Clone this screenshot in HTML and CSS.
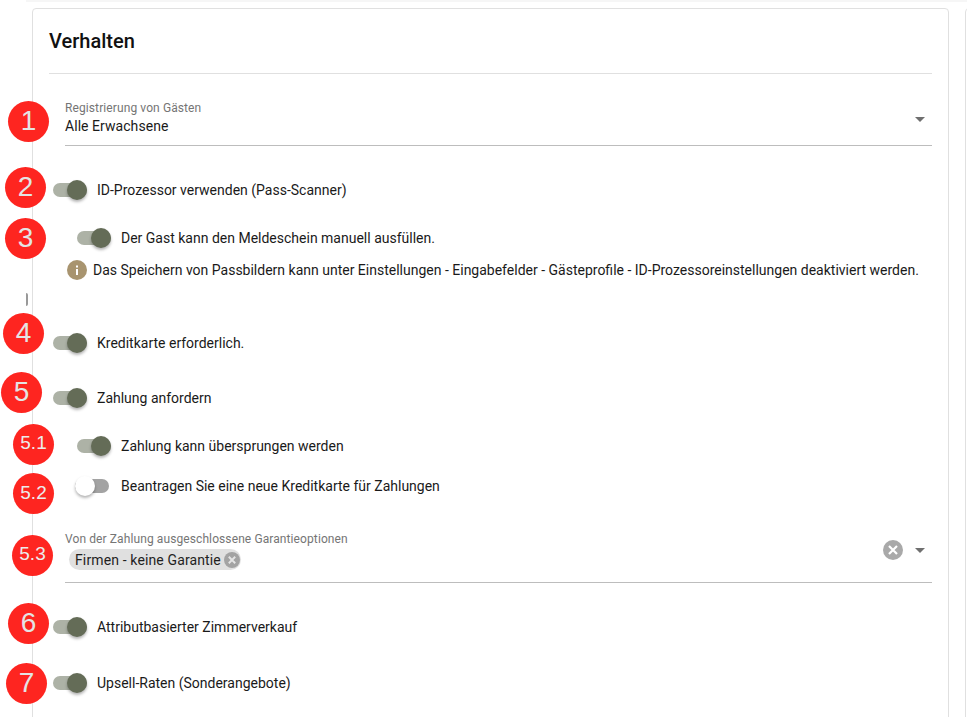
FILE: index.html
```html
<!DOCTYPE html>
<html lang="de">
<head>
<meta charset="utf-8">
<title>Verhalten</title>
<link rel="stylesheet" href="styles.css">
</head>
<body>
<div class="page">
  <div class="topstrip"></div>
  <div class="columns">
    <section class="card">
      <h2 class="title">Verhalten</h2>
      <div class="divider"></div>

      <div class="select select-a">
        <div class="select-body">
          <div class="label">Registrierung von Gästen</div>
          <div class="value">Alle Erwachsene</div>
        </div>
        <span class="caret"></span>
      </div>

      <div class="row row-2"><span class="toggle"><span class="knob"></span></span><span>ID-Prozessor verwenden (Pass-Scanner)</span></div>
      <div class="row nested row-3"><span class="toggle"><span class="knob"></span></span><span>Der Gast kann den Meldeschein manuell ausfüllen.</span></div>
      <div class="info">
        <svg class="info-icon" width="20" height="20" viewBox="0 0 20 20"><circle cx="10" cy="10" r="10" fill="#a8946f"/><rect x="9" y="9" width="2" height="6" fill="#fff"/><rect x="9" y="5.5" width="2" height="2" fill="#fff"/></svg>
        <span>Das Speichern von Passbildern kann unter Einstellungen - Eingabefelder - Gästeprofile - ID-Prozessoreinstellungen deaktiviert werden.</span>
      </div>
      <div class="row row-4"><span class="toggle"><span class="knob"></span></span><span>Kreditkarte erforderlich.</span></div>
      <div class="row row-5"><span class="toggle"><span class="knob"></span></span><span>Zahlung anfordern</span></div>
      <div class="row nested row-51"><span class="toggle"><span class="knob"></span></span><span>Zahlung kann übersprungen werden</span></div>
      <div class="row nested row-52"><span class="toggle off"><span class="knob"></span></span><span>Beantragen Sie eine neue Kreditkarte für Zahlungen</span></div>

      <div class="select select-b">
        <div class="select-body">
          <div class="label">Von der Zahlung ausgeschlossene Garantieoptionen</div>
          <span class="chip">Firmen - keine Garantie
            <svg class="chip-x" width="16" height="16" viewBox="0 0 20 20"><circle cx="10" cy="10" r="10" fill="#a3a3a3"/><path d="M6 6l8 8M14 6l-8 8" stroke="#e4e4e4" stroke-width="2.4" fill="none"/></svg>
          </span>
        </div>
        <svg class="clear" width="20" height="20" viewBox="0 0 20 20"><circle cx="10" cy="10" r="10" fill="#a9a9a9"/><path d="M6 6l8 8M14 6l-8 8" stroke="#fff" stroke-width="2.2" fill="none"/></svg>
        <span class="caret"></span>
      </div>

      <div class="row row-6"><span class="toggle"><span class="knob"></span></span><span>Attributbasierter Zimmerverkauf</span></div>
      <div class="row row-7"><span class="toggle"><span class="knob"></span></span><span>Upsell-Raten (Sonderangebote)</span></div>
    </section>
    <section class="card-next"></section>
  </div>

  <span class="sliver"></span>
  <span class="badge b1 big">1</span>
  <span class="badge b2 big">2</span>
  <span class="badge b3 big">3</span>
  <span class="badge b4 big">4</span>
  <span class="badge b5 big">5</span>
  <span class="badge b51">5.1</span>
  <span class="badge b52">5.2</span>
  <span class="badge b53">5.3</span>
  <span class="badge b6 big">6</span>
  <span class="badge b7 big">7</span>
</div>
</body>
</html>
```
FILE: styles.css
```css
html, body {
  margin: 0;
  height: 100%;
  overflow: hidden;
  background: #fff;
}
body {
  font-family: Roboto, "Liberation Sans", sans-serif;
  font-size: 14px;
  color: #1a1a1a;
}
.page {
  position: relative;
  width: 967px;
  height: 717px;
  overflow: hidden;
}
.topstrip {
  height: 2px;
  margin-left: 26px;
  background: #f6f6f6;
}
.columns {
  display: flex;
  gap: 16px;
  padding: 6px 0 0 32px;
}
.card {
  flex: none;
  width: 917px;
  height: 900px;
  box-sizing: border-box;
  border: 1px solid #e0e0e0;
  border-radius: 4px;
  padding: 0 16px;
}
.card-next {
  flex: none;
  width: 200px;
  height: 900px;
  border: 1px solid #e0e0e0;
  border-radius: 4px;
}
.title {
  margin: 0;
  height: 64px;
  line-height: 64px;
  font-size: 20px;
  font-weight: 500;
  color: #111;
}
.divider {
  height: 1px;
  background: #e0e0e0;
}
.select {
  display: flex;
  align-items: center;
  margin-left: 16px;
  border-bottom: 1px solid #bdbdbd;
  box-sizing: border-box;
}
.select-body { flex: 1; }
.select-a {
  height: 72px;
  padding-top: 17px;
}
.select-b {
  height: 66px;
  margin-top: 19px;
  padding-top: 3px;
}
.label {
  font-size: 12px;
  line-height: 14px;
  letter-spacing: .1px;
  color: #757575;
}
.value {
  font-size: 14px;
  line-height: 20px;
  margin-top: 1px;
  letter-spacing: .05px;
}
.caret {
  width: 0;
  height: 0;
  margin: 0 7px 0 10px;
  border-left: 5px solid transparent;
  border-right: 5px solid transparent;
  border-top: 5px solid #6f6f6f;
}
.select-a .caret { margin-top: 2px; }
.select-b .caret { margin-top: -1px; margin-left: 12px; }
.clear { flex: none; margin-top: -3px; }
.chip {
  display: inline-flex;
  align-items: center;
  height: 21px;
  margin: 3px 0 0 4px;
  padding: 0 1px 0 6px;
  border-radius: 11px;
  background: #e0e0e0;
  color: #1f1f1f;
  letter-spacing: .13px;
  white-space: nowrap;
}
.chip-x { margin-left: 3px; }
.row {
  display: flex;
  align-items: center;
  height: 24px;
  margin-left: 4px;
  gap: 10px;
}
.row.nested { margin-left: 28px; }
.row-2 { margin-top: 32px; }
.row-3 { margin-top: 24px; }
.row-4 { margin-top: 51px; }
.row-5 { margin-top: 31px; }
.row-51 { margin-top: 24px; }
.row-52 { margin-top: 16px; }
.row-6 { margin-top: 32px; }
.row-7 { margin-top: 32px; }
.toggle {
  position: relative;
  flex: none;
  width: 34px;
  height: 14px;
  border-radius: 7px;
  background: #adb2a6;
}
.knob {
  position: absolute;
  top: -3px;
  right: 0;
  width: 20px;
  height: 20px;
  border-radius: 50%;
  background: #646c57;
  box-shadow: 0 2px 3px rgba(0,0,0,.3);
}
.toggle.off {
  margin: 0 2px 0 -2px;
  background: #a3a3a3;
}
.toggle.off .knob {
  right: auto;
  left: 0;
  background: #fff;
}
.info {
  display: flex;
  align-items: center;
  gap: 6px;
  height: 20px;
  margin: 10px 0 0 18px;
  white-space: nowrap;
}
.info-icon { flex: none; }
.sliver {
  position: absolute;
  left: 26px;
  top: 293px;
  width: 2px;
  height: 13px;
  border-radius: 0 2px 2px 0;
  background: #999;
}
.badge {
  position: absolute;
  width: 41px;
  height: 41px;
  border-radius: 50%;
  background: #fe2520;
  color: #ececec;
  font-family: "Liberation Sans", Arial, sans-serif;
  font-size: 19px;
  line-height: 38px;
  text-align: center;
}
.badge.big { font-size: 28px; line-height: 40px; color: #e4e4e4; }
.b1 { left: 8px; top: 101px; }
.b2 { left: 5px; top: 167px; }
.b3 { left: 5px; top: 218px; }
.b4 { left: 3px; top: 313px; }
.b5 { left: 1px; top: 372px; }
.b51 { left: 13px; top: 424px; }
.b52 { left: 13px; top: 473px; line-height: 40px; }
.b53 { left: 12px; top: 535px; }
.b6 { left: 8px; top: 603px; }
.b7 { left: 6px; top: 663px; }
```
